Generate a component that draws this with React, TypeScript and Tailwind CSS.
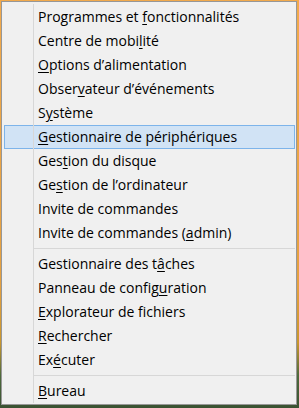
import React from "react";

type Item = { pre: string; key: string; post: string; active?: boolean };

const group1: Item[] = [
  { pre: "Programmes et ", key: "f", post: "onctionnalités" },
  { pre: "Centre de mobi", key: "l", post: "ité" },
  { pre: "", key: "O", post: "ptions d’alimentation" },
  { pre: "Obser", key: "v", post: "ateur d’événements" },
  { pre: "S", key: "y", post: "stème" },
  { pre: "", key: "G", post: "estionnaire de périphériques", active: true },
  { pre: "Ges", key: "t", post: "ion du disque" },
  { pre: "Ge", key: "s", post: "tion de l’ordinateur" },
  { pre: "Invite de commandes", key: "", post: "" },
  { pre: "Invite de commandes (", key: "a", post: "dmin)" },
];

const group2: Item[] = [
  { pre: "Gestionnaire des t", key: "â", post: "ches" },
  { pre: "Panneau de config", key: "u", post: "ration" },
  { pre: "", key: "E", post: "xplorateur de fichiers" },
  { pre: "", key: "R", post: "echercher" },
  { pre: "Ex", key: "é", post: "cuter" },
];

const group3: Item[] = [{ pre: "", key: "B", post: "ureau" }];

function Row({ item }: { item: Item }) {
  return (
    <div
      className={
        "h-[24px] flex items-center ml-[2px] mr-[1px] border " +
        (item.active ? "bg-[#d1e3f5] border-[#7db4ea]" : "border-transparent")
      }
    >
      <span className="pl-[33px] whitespace-pre leading-none">
        {item.pre}
        {item.key && (
          <span className="underline decoration-[1px] underline-offset-[2px]">{item.key}</span>
        )}
        {item.post}
      </span>
    </div>
  );
}

function Sep() {
  return (
    <div className="h-[7px] flex flex-col pt-[3px] pl-[31px] pr-[1px]">
      <div className="h-px bg-[#d7d7d7]" />
    </div>
  );
}

export default function App() {
  return (
    <div className="w-[299px] h-[408px] overflow-hidden bg-[linear-gradient(to_bottom,#f2aa4c_0%,#e4a040_70%,#c8962e_84%,#4e6a3c_92%,#3a5232_100%)] pl-[1px] pt-[1px]">
      <div
        className="relative w-[296px] h-[404px] border border-[#979797] bg-[#f0f0f0] pt-[3px] pb-[1px] text-[14px] text-black"
        style={{ fontFamily: '"Open Sans", "Noto Sans", sans-serif' }}
      >
        <div className="absolute left-[31px] top-[2px] bottom-[1px] w-px bg-[#d7d7d7] z-10" />
        {group1.map((it, i) => (
          <Row key={"a" + i} item={it} />
        ))}
        <Sep />
        {group2.map((it, i) => (
          <Row key={"b" + i} item={it} />
        ))}
        <Sep />
        {group3.map((it, i) => (
          <Row key={"c" + i} item={it} />
        ))}
      </div>
    </div>
  );
}
